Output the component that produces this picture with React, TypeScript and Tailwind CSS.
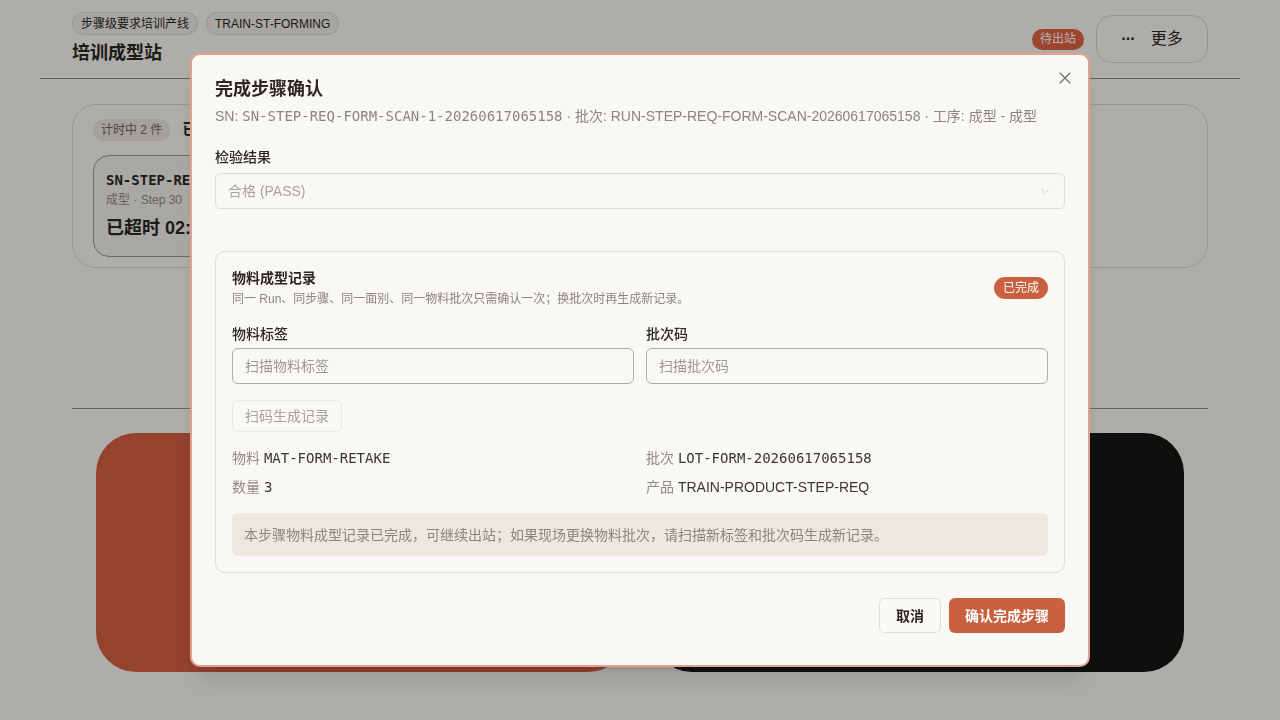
import React from 'react';
import { X, ChevronDown } from 'lucide-react';

const mono = "font-['DejaVu_Sans_Mono',monospace]";

const StationPage = () => {
  return (
    <div className="min-h-screen bg-[#faf8f4] px-10 text-[#2b2722]">
      {/* header */}
      <div className="flex items-center justify-between px-8 pt-3 h-[79px] border-b border-[#8f8d89]">
        <div className="self-start">
          <div className="flex gap-2">
            <span className="h-[23px] px-2 rounded-full border border-[#d8d5cf] bg-[#f1eee8] text-xs flex items-center">步骤级要求培训产线</span>
            <span className="h-[23px] px-2 rounded-full border border-[#d8d5cf] bg-[#f1eee8] text-xs flex items-center">TRAIN-ST-FORMING</span>
          </div>
          <h1 className="text-lg font-bold mt-1.5 leading-6">培训成型站</h1>
        </div>
        <div className="flex items-center gap-3 -mt-3">
          <span className="h-[21px] px-2 rounded-full bg-[#e36343] text-white text-xs flex items-center">待出站</span>
          <button className="w-[112px] h-12 rounded-2xl border border-[#d8d5cf] flex items-center justify-center gap-4 text-base">
            <span className="font-bold tracking-tighter">···</span>
            <span>更多</span>
          </button>
        </div>
      </div>

      <div className="px-8">
        {/* timing card */}
        <div className="mt-[25px] h-[164px] rounded-3xl border border-[#dcd9d3] px-5 pt-[13px]">
          <div className="flex items-center gap-3">
            <span className="h-[22px] px-2 rounded-full bg-[#ebe7df] text-xs flex items-center text-[#6b665f]">计时中 2 件</span>
            <span className="text-base font-bold">已超时</span>
          </div>
          <div className="mt-[13px] w-[280px] h-[102px] rounded-2xl border border-[#9c9993] bg-[#f3f1ec] px-3 pt-[14px] overflow-hidden">
            <div className={`${mono} text-sm font-bold leading-5`}>SN-STEP-REQ</div>
            <div className="text-xs text-[#8f8a83] mt-0.5">成型 · Step 30</div>
            <div className="text-lg font-bold mt-1.5">已超时 02:15</div>
          </div>
        </div>

        <div className="mt-[140px] border-t border-[#8f8d89]" />

        <div className="grid grid-cols-2 gap-6 px-6 mt-6">
          <div className="h-[239px] rounded-[40px] bg-[#d46044]" />
          <div className="h-[239px] rounded-[40px] bg-[#161613]" />
        </div>
      </div>
    </div>
  );
};

const CompleteStepDialog = () => {
  return (
    <div className="fixed inset-0 bg-black/30 flex items-center justify-center">
      <div className="relative w-[900px] rounded-[10px] border-2 border-[#e2a08f] bg-[#faf8f4] px-[23px] pt-5 pb-[32px] shadow-xl">
        <button className="absolute right-[13px] top-[13px] text-[#6f6b66]">
          <X size={20} strokeWidth={1.4} />
        </button>
        <h2 className="text-lg font-bold leading-7 text-[#2b2722]">完成步骤确认</h2>
        <p className="mt-[3px] text-sm leading-5 text-[#8a857e] whitespace-nowrap">
          SN: <span className={mono}>SN-STEP-REQ-FORM-SCAN-1-20260617065158</span> · 批次: RUN-STEP-REQ-FORM-SCAN-20260617065158 · 工序: 成型 - 成型
        </p>

        <label className="block mt-[21px] text-sm font-medium leading-5 text-[#2b2722]">检验结果</label>
        <div className="mt-1.5 h-9 rounded-md border border-[#dedad4] flex items-center justify-between px-3 text-sm text-[#a8a39c]">
          <span>合格 (PASS)</span>
          <ChevronDown size={14} strokeWidth={1.25} className="text-[#c4c0b9]" />
        </div>

        {/* material card */}
        <div className="mt-[42px] rounded-[10px] border border-[#dedad4] px-4 pt-4 pb-4">
          <div className="flex items-center justify-between">
            <div>
              <div className="text-sm font-semibold leading-5 text-[#2b2722]">物料成型记录</div>
              <div className="mt-[3px] text-xs leading-4 text-[#8a857e]">同一 Run、同步骤、同一面别、同一物料批次只需确认一次；换批次时再生成新记录。</div>
            </div>
            <span className="h-[22px] px-[9px] rounded-full bg-[#c9603f] text-white text-xs flex items-center">已完成</span>
          </div>

          <div className="mt-[17px] grid grid-cols-2 gap-3">
            <div>
              <label className="block text-sm font-medium leading-5 text-[#2b2722]">物料标签</label>
              <input
                className="mt-1 w-full h-9 rounded-md border border-[#aeaaa4] bg-transparent px-3 text-sm placeholder:text-[#9d9891] outline-none"
                placeholder="扫描物料标签"
              />
            </div>
            <div>
              <label className="block text-sm font-medium leading-5 text-[#2b2722]">批次码</label>
              <input
                className="mt-1 w-full h-9 rounded-md border border-[#aeaaa4] bg-transparent px-3 text-sm placeholder:text-[#9d9891] outline-none"
                placeholder="扫描批次码"
              />
            </div>
          </div>

          <button className="mt-4 h-8 px-3 rounded-md border border-[#ebe8e2] text-sm text-[#a8a39c]">扫码生成记录</button>

          <div className="mt-4 grid grid-cols-2 gap-x-3 gap-y-[9px] text-sm leading-5">
            <div><span className="text-[#8f8a83]">物料 </span><span className={`${mono} text-[#3b3731]`}>MAT-FORM-RETAKE</span></div>
            <div><span className="text-[#8f8a83]">批次 </span><span className={`${mono} text-[#3b3731]`}>LOT-FORM-20260617065158</span></div>
            <div><span className="text-[#8f8a83]">数量 </span><span className={`${mono} text-[#3b3731]`}>3</span></div>
            <div><span className="text-[#8f8a83]">产品 </span><span className="text-[#3b3731]">TRAIN-PRODUCT-STEP-REQ</span></div>
          </div>

          <div className="mt-4 h-[43px] rounded-md bg-[#ede8df] px-3 flex items-center text-sm text-[#8a857e]">
            本步骤物料成型记录已完成，可继续出站；如果现场更换物料批次，请扫描新标签和批次码生成新记录。
          </div>
        </div>

        <div className="mt-[25px] flex justify-end gap-2">
          <button className="h-[35px] px-4 rounded-md border border-[#e0ddd7] bg-[#fbfaf7] text-sm font-semibold text-[#2b2722]">取消</button>
          <button className="h-[35px] px-4 rounded-md bg-[#c9603f] text-sm font-semibold text-white">确认完成步骤</button>
        </div>
      </div>
    </div>
  );
};

const App = () => {
  return (
    <div className="font-['Liberation_Sans','Noto_Sans_CJK_SC',sans-serif]">
      <StationPage />
      <CompleteStepDialog />
    </div>
  );
};

export default App;
